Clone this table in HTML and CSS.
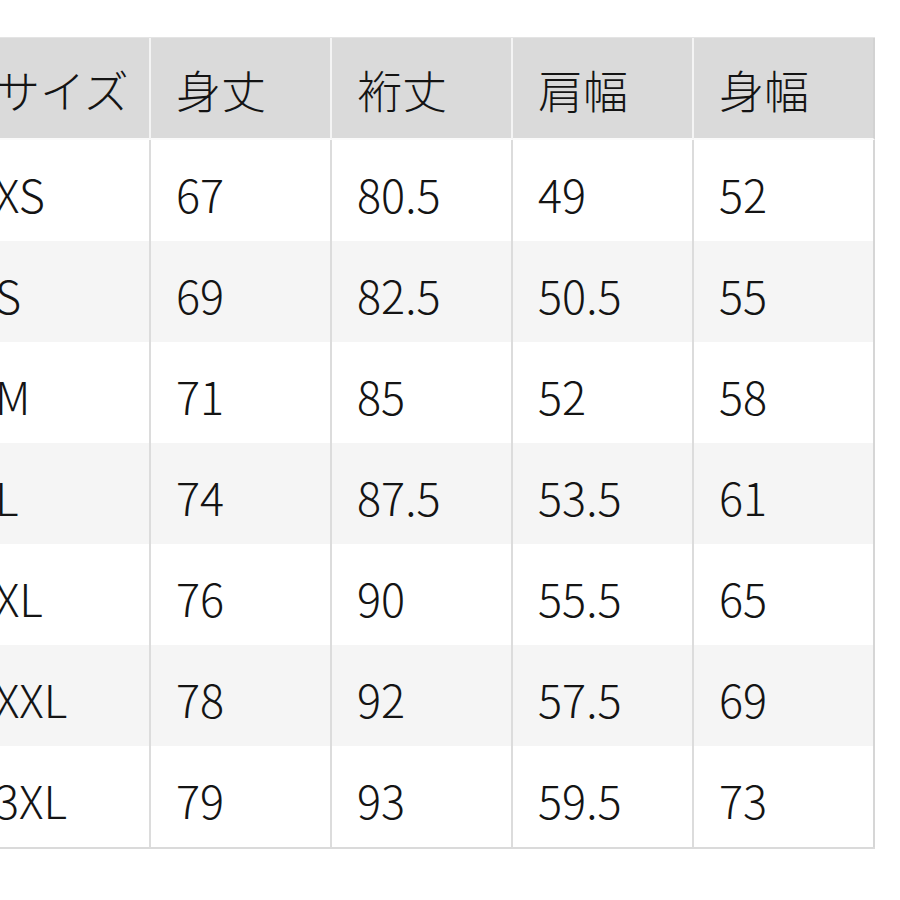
FILE: index.html
```html
<!DOCTYPE html>
<html lang="ja">
<head>
<meta charset="utf-8">
<title>サイズ表</title>
<link rel="stylesheet" href="styles.css">
</head>
<body>
<div class="size-table">
  <div class="cell head">サイズ</div>
  <div class="cell head">身丈</div>
  <div class="cell head">裄丈</div>
  <div class="cell head">肩幅</div>
  <div class="cell head last">身幅</div>

  <div class="cell">XS</div><div class="cell">67</div><div class="cell">80.5</div><div class="cell">49</div><div class="cell last">52</div>
  <div class="cell alt">S</div><div class="cell alt">69</div><div class="cell alt">82.5</div><div class="cell alt">50.5</div><div class="cell alt last">55</div>
  <div class="cell">M</div><div class="cell">71</div><div class="cell">85</div><div class="cell">52</div><div class="cell last">58</div>
  <div class="cell alt">L</div><div class="cell alt">74</div><div class="cell alt">87.5</div><div class="cell alt">53.5</div><div class="cell alt last">61</div>
  <div class="cell">XL</div><div class="cell">76</div><div class="cell">90</div><div class="cell">55.5</div><div class="cell last">65</div>
  <div class="cell alt">XXL</div><div class="cell alt">78</div><div class="cell alt">92</div><div class="cell alt">57.5</div><div class="cell alt last">69</div>
  <div class="cell">3XL</div><div class="cell">79</div><div class="cell">93</div><div class="cell">59.5</div><div class="cell last">73</div>
</div>
</body>
</html>
```
FILE: styles.css
```css
html, body {
  margin: 0;
  padding: 0;
  background: #ffffff;
}

body {
  font-family: "Noto Sans CJK JP", "Noto Sans", sans-serif;
  font-weight: 300;
  color: #141414;
  overflow: hidden;
}

.size-table {
  display: grid;
  grid-template-columns: repeat(5, 181px);
  width: max-content;
  margin-top: 37px;
  margin-left: -30px;
  border-top: 1px solid #e4e4e4;
  border-bottom: 2px solid #dadada;
}

.cell {
  box-sizing: border-box;
  height: 101px;
  display: flex;
  align-items: center;
  padding-left: 25px;
  padding-top: 5px;
  font-size: 45px;
  line-height: 1;
  white-space: nowrap;
  background: #ffffff;
  border-right: 2px solid #dcdcdc;
}

.cell.alt {
  background: #f5f5f5;
}

.cell.head {
  height: 102px;
  padding-top: 2px;
  background: #dadada;
  border-right: 2px solid #f4f4f4;
  border-bottom: 2px solid #fafafa;
}

.cell.head.last {
  border-right: 2px solid #d2d2d2;
}

.cell.last {
  border-right: 2px solid #d6d6d6;
}
```
